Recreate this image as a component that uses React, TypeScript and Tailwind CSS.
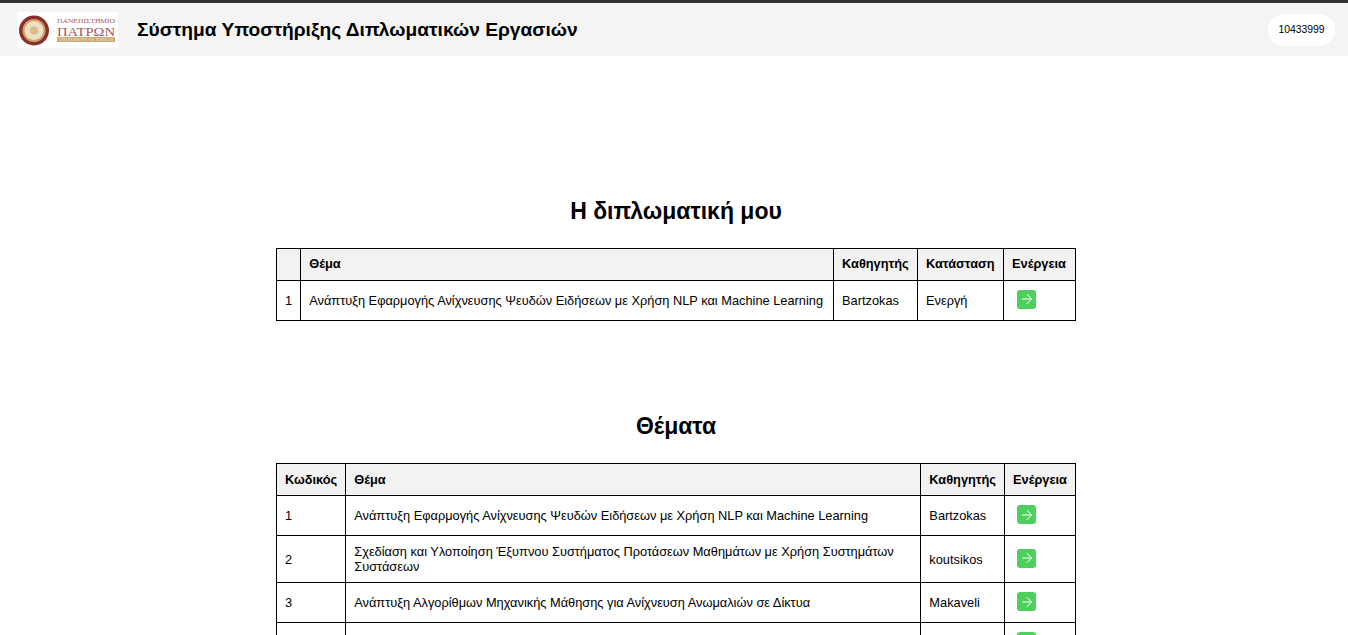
import { ArrowRight } from "lucide-react";

const myThesis = [
  {
    id: "1",
    title: "Ανάπτυξη Εφαρμογής Ανίχνευσης Ψευδών Ειδήσεων με Χρήση NLP και Machine Learning",
    professor: "Bartzokas",
    status: "Ενεργή",
  },
];

const topics = [
  {
    id: "1",
    title: "Ανάπτυξη Εφαρμογής Ανίχνευσης Ψευδών Ειδήσεων με Χρήση NLP και Machine Learning",
    professor: "Bartzokas",
  },
  {
    id: "2",
    title: "Σχεδίαση και Υλοποίηση Έξυπνου Συστήματος Προτάσεων Μαθημάτων με Χρήση Συστημάτων Συστάσεων",
    professor: "koutsikos",
  },
  {
    id: "3",
    title: "Ανάπτυξη Αλγορίθμων Μηχανικής Μάθησης για Ανίχνευση Ανωμαλιών σε Δίκτυα",
    professor: "Makaveli",
  },
  { id: "", title: "", professor: "" },
];

const thClass = "border border-black bg-[#f2f2f2] px-2 h-8 text-left text-[12.8px] font-bold whitespace-nowrap";
const tdClass = "border border-black px-2 py-2 h-10 text-[12.8px] leading-[15px]";

function ActionButton() {
  return (
    <button className="mb-[2px] ml-1 flex h-[19px] w-[19px] items-center justify-center rounded-[3px] bg-[#4ecf5e] text-white">
      <ArrowRight size={16} strokeWidth={1.5} />
    </button>
  );
}

function Logo() {
  return (
    <svg width="101" height="36" viewBox="0 0 101 36" className="bg-white" role="img" aria-label="Πανεπιστήμιο Πατρών">
      <circle cx="17" cy="18.5" r="15" fill="#8a2f2c" />
      <circle cx="17" cy="18.5" r="11.5" fill="#c9a46a" />
      <circle cx="17" cy="18.5" r="9.5" fill="#f0dfc2" />
      <circle cx="17" cy="18.5" r="4" fill="#d9bd8e" />
      <text x="40" y="11" fontSize="7" fontFamily="Liberation Serif, serif" fill="#a4585a" textLength="58" lengthAdjust="spacingAndGlyphs">
        ΠΑΝΕΠΙΣΤΗΜΙΟ
      </text>
      <text x="40" y="23.5" fontSize="12" fontFamily="Liberation Serif, serif" fill="#a4585a" textLength="58" lengthAdjust="spacingAndGlyphs">
        ΠΑΤΡΩΝ
      </text>
      <rect x="40" y="25" width="58" height="5" fill="#cdaa74" />
      <text x="42" y="29.2" fontSize="4" fontFamily="Liberation Serif, serif" fill="#f7ecd9" textLength="54">
        UNIVERSITY OF PATRAS
      </text>
    </svg>
  );
}

export default function App() {
  return (
    <div className="h-screen overflow-hidden bg-white font-['Liberation_Sans',Arial,sans-serif] text-black">
      <header className="flex h-14 items-center border-t-[3px] border-[#333333] bg-[#f4f4f4] pl-[17px] pr-[13px]">
        <Logo />
        <h1 className="ml-[19px] mt-0.5 text-[19.2px] font-bold">Σύστημα Υποστήριξης Διπλωματικών Εργασιών</h1>
        <div className="ml-auto flex h-8 w-[67px] items-center justify-center rounded-2xl bg-white text-[10.4px] font-medium">10433999</div>
      </header>

      <main className="mx-auto w-[804px] pl-1">
        <section className="pt-[138px]">
          <h2 className="mb-[19px] text-center text-[23px] font-bold">Η διπλωματική μου</h2>
          <table className="w-full border-collapse">
            <thead>
              <tr>
                <th className={thClass}></th>
                <th className={thClass}>Θέμα</th>
                <th className={thClass}>Καθηγητής</th>
                <th className={thClass}>Κατάσταση</th>
                <th className={`${thClass} w-[72px]`}>Ενέργεια</th>
              </tr>
            </thead>
            <tbody>
              {myThesis.map((t) => (
                <tr key={t.id}>
                  <td className={tdClass}>{t.id}</td>
                  <td className={tdClass}>{t.title}</td>
                  <td className={tdClass}>{t.professor}</td>
                  <td className={tdClass}>{t.status}</td>
                  <td className={`${tdClass} pl-[9px]`}>
                    <ActionButton />
                  </td>
                </tr>
              ))}
            </tbody>
          </table>
        </section>

        <section className="pt-[88px]">
          <h2 className="mb-5 text-center text-[23px] font-bold">Θέματα</h2>
          <table className="w-full border-collapse">
            <thead>
              <tr>
                <th className={thClass}>Κωδικός</th>
                <th className={thClass}>Θέμα</th>
                <th className={thClass}>Καθηγητής</th>
                <th className={thClass}>Ενέργεια</th>
              </tr>
            </thead>
            <tbody>
              {topics.map((t, i) => (
                <tr key={i}>
                  <td className={tdClass}>{t.id}</td>
                  <td className={tdClass}>{t.title}</td>
                  <td className={tdClass}>{t.professor}</td>
                  <td className={tdClass}>
                    <ActionButton />
                  </td>
                </tr>
              ))}
            </tbody>
          </table>
        </section>
      </main>
    </div>
  );
}
